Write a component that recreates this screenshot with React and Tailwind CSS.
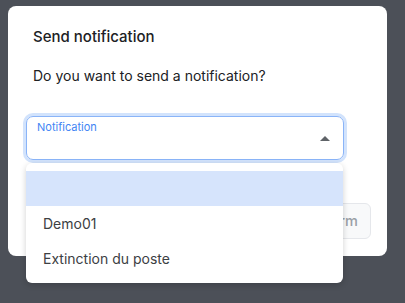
import React from "react";

export default function App() {
  return (
    <div
      className="relative w-[405px] h-[303px] overflow-hidden bg-[#4c5058] pt-[6px] pl-[8px]"
      style={{ fontFamily: "Inter, 'Noto Sans', sans-serif" }}
    >
      <div className="w-[379px] h-[250px] bg-white rounded-[8px] pt-[21px] flex flex-col">
        <div className="pl-[25px] text-[15px] leading-[20px] font-medium text-[#202124]">
          Send notification
        </div>
        <div className="pl-[25px] mt-[19px] text-[14px] leading-[20px] text-[#202124]">
          Do you want to send a notification?
        </div>
        <div className="ml-[18px] mt-[30px] w-[318px] h-[44px] rounded-[7px] border border-[#8ab4f8] ring-[3px] ring-[#d2e3fc] flex items-start justify-between pl-[10px] pr-[13px] pt-[3px]">
          <span className="text-[11px] leading-[14px] text-[#4285f4]">Notification</span>
          <svg width="10" height="5" viewBox="0 0 10 5" className="mt-[16px]">
            <path d="M0 5 L5 0 L10 5 Z" fill="#5f6368" />
          </svg>
        </div>
        <div className="mt-[43px] pr-[16px] flex justify-end">
          <button className="h-[36px] pl-[13px] pr-[12px] rounded-[6px] border border-[#e5e7eb] bg-[#f8f9fa] text-[14.5px] font-medium text-[#9aa0a6]">
            Confirm
          </button>
        </div>
      </div>

      <div className="absolute left-[26px] top-[163px] w-[317px] h-[120px] bg-white rounded-[6px] shadow-[0_2px_6px_rgba(0,0,0,0.18)] py-[8px]">
        <div className="h-[35px] bg-[#d6e4fc]"></div>
        <div className="h-[35px] flex items-center pl-[17px] text-[14px] text-[#3c4043]">Demo01</div>
        <div className="h-[35px] flex items-center pl-[17px] text-[14px] text-[#3c4043]">Extinction du poste</div>
      </div>
    </div>
  );
}
